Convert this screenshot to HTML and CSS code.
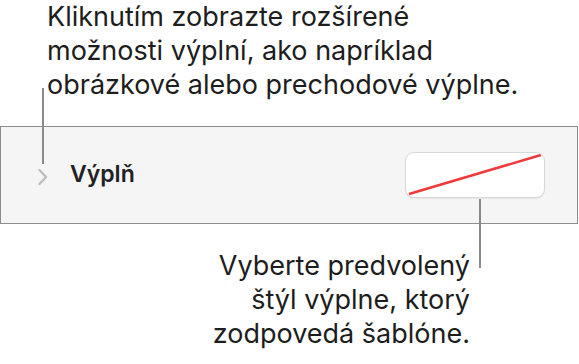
FILE: index.html
```html
<!DOCTYPE html>
<html lang="sk">
<head>
  <meta charset="UTF-8">
  <meta name="viewport" content="width=device-width, initial-scale=1.0">
  <link rel="stylesheet" href="styles.css">
  <title>Výplň</title>
</head>
<body>
  <div class="page">
    <p class="note note-top">Kliknutím zobrazte rozšírené<br>možnosti výplní, ako napríklad<br>obrázkové alebo prechodové výplne.</p>
    <div class="panel">
      <svg class="chevron" width="12" height="18" viewBox="0 0 12 18">
        <path d="M2.5 2 L9 9 L2.5 16" fill="none" stroke="#bdbdbd" stroke-width="2.4" stroke-linecap="round" stroke-linejoin="round"/>
      </svg>
      <span class="label">Výplň</span>
      <div class="swatch">
        <svg width="138" height="44" viewBox="0 0 138 44">
          <line x1="3" y1="41" x2="135" y2="2" stroke="#f0393a" stroke-width="2.6"/>
        </svg>
      </div>
    </div>
    <p class="note note-bottom">Vyberte predvolený<br>štýl výplne, ktorý<br>zodpovedá šablóne.</p>
    <div class="leader leader-left"></div>
    <div class="leader leader-right"></div>
  </div>
</body>
</html>
```

FILE: styles.css
```css
body {
  margin: 0;
  background-color: white;
  font-family: Inter, "Liberation Sans", Arial, sans-serif;
  color: #1d1d1d;
}

.page {
  position: relative;
  width: 579px;
  height: 364px;
  overflow: hidden;
}

.note {
  margin: 0;
  font-size: 27px;
  line-height: 34px;
}

.note-top {
  padding: 0 0 0 47px;
}

.panel {
  display: flex;
  align-items: center;
  height: 96px;
  margin-top: 24px;
  padding-left: 36px;
  background-color: #f5f5f5;
  border: 1px solid #8c8c8c;
  width: 540px;
}

.chevron {
  margin-top: 4px;
}

.label {
  margin-left: 21px;
  margin-top: -2px;
  font-size: 23px;
  font-weight: 600;
  color: #222;
}

.swatch {
  margin-left: auto;
  margin-right: 33px;
  width: 138px;
  height: 44px;
  background-color: white;
  border-radius: 8px;
  box-shadow: 0 0 0 1px #d8d8d8, 0 1px 2px rgba(0, 0, 0, 0.2);
  overflow: hidden;
}

.swatch svg {
  display: block;
}

.note-bottom {
  width: 470px;
  text-align: right;
  padding-top: 25px;
}

.leader {
  position: absolute;
  width: 2px;
  background-color: #8a8a8a;
}

.leader-left {
  left: 42px;
  top: 88px;
  height: 76px;
}

.leader-right {
  left: 479px;
  top: 199px;
  height: 69px;
}
```
